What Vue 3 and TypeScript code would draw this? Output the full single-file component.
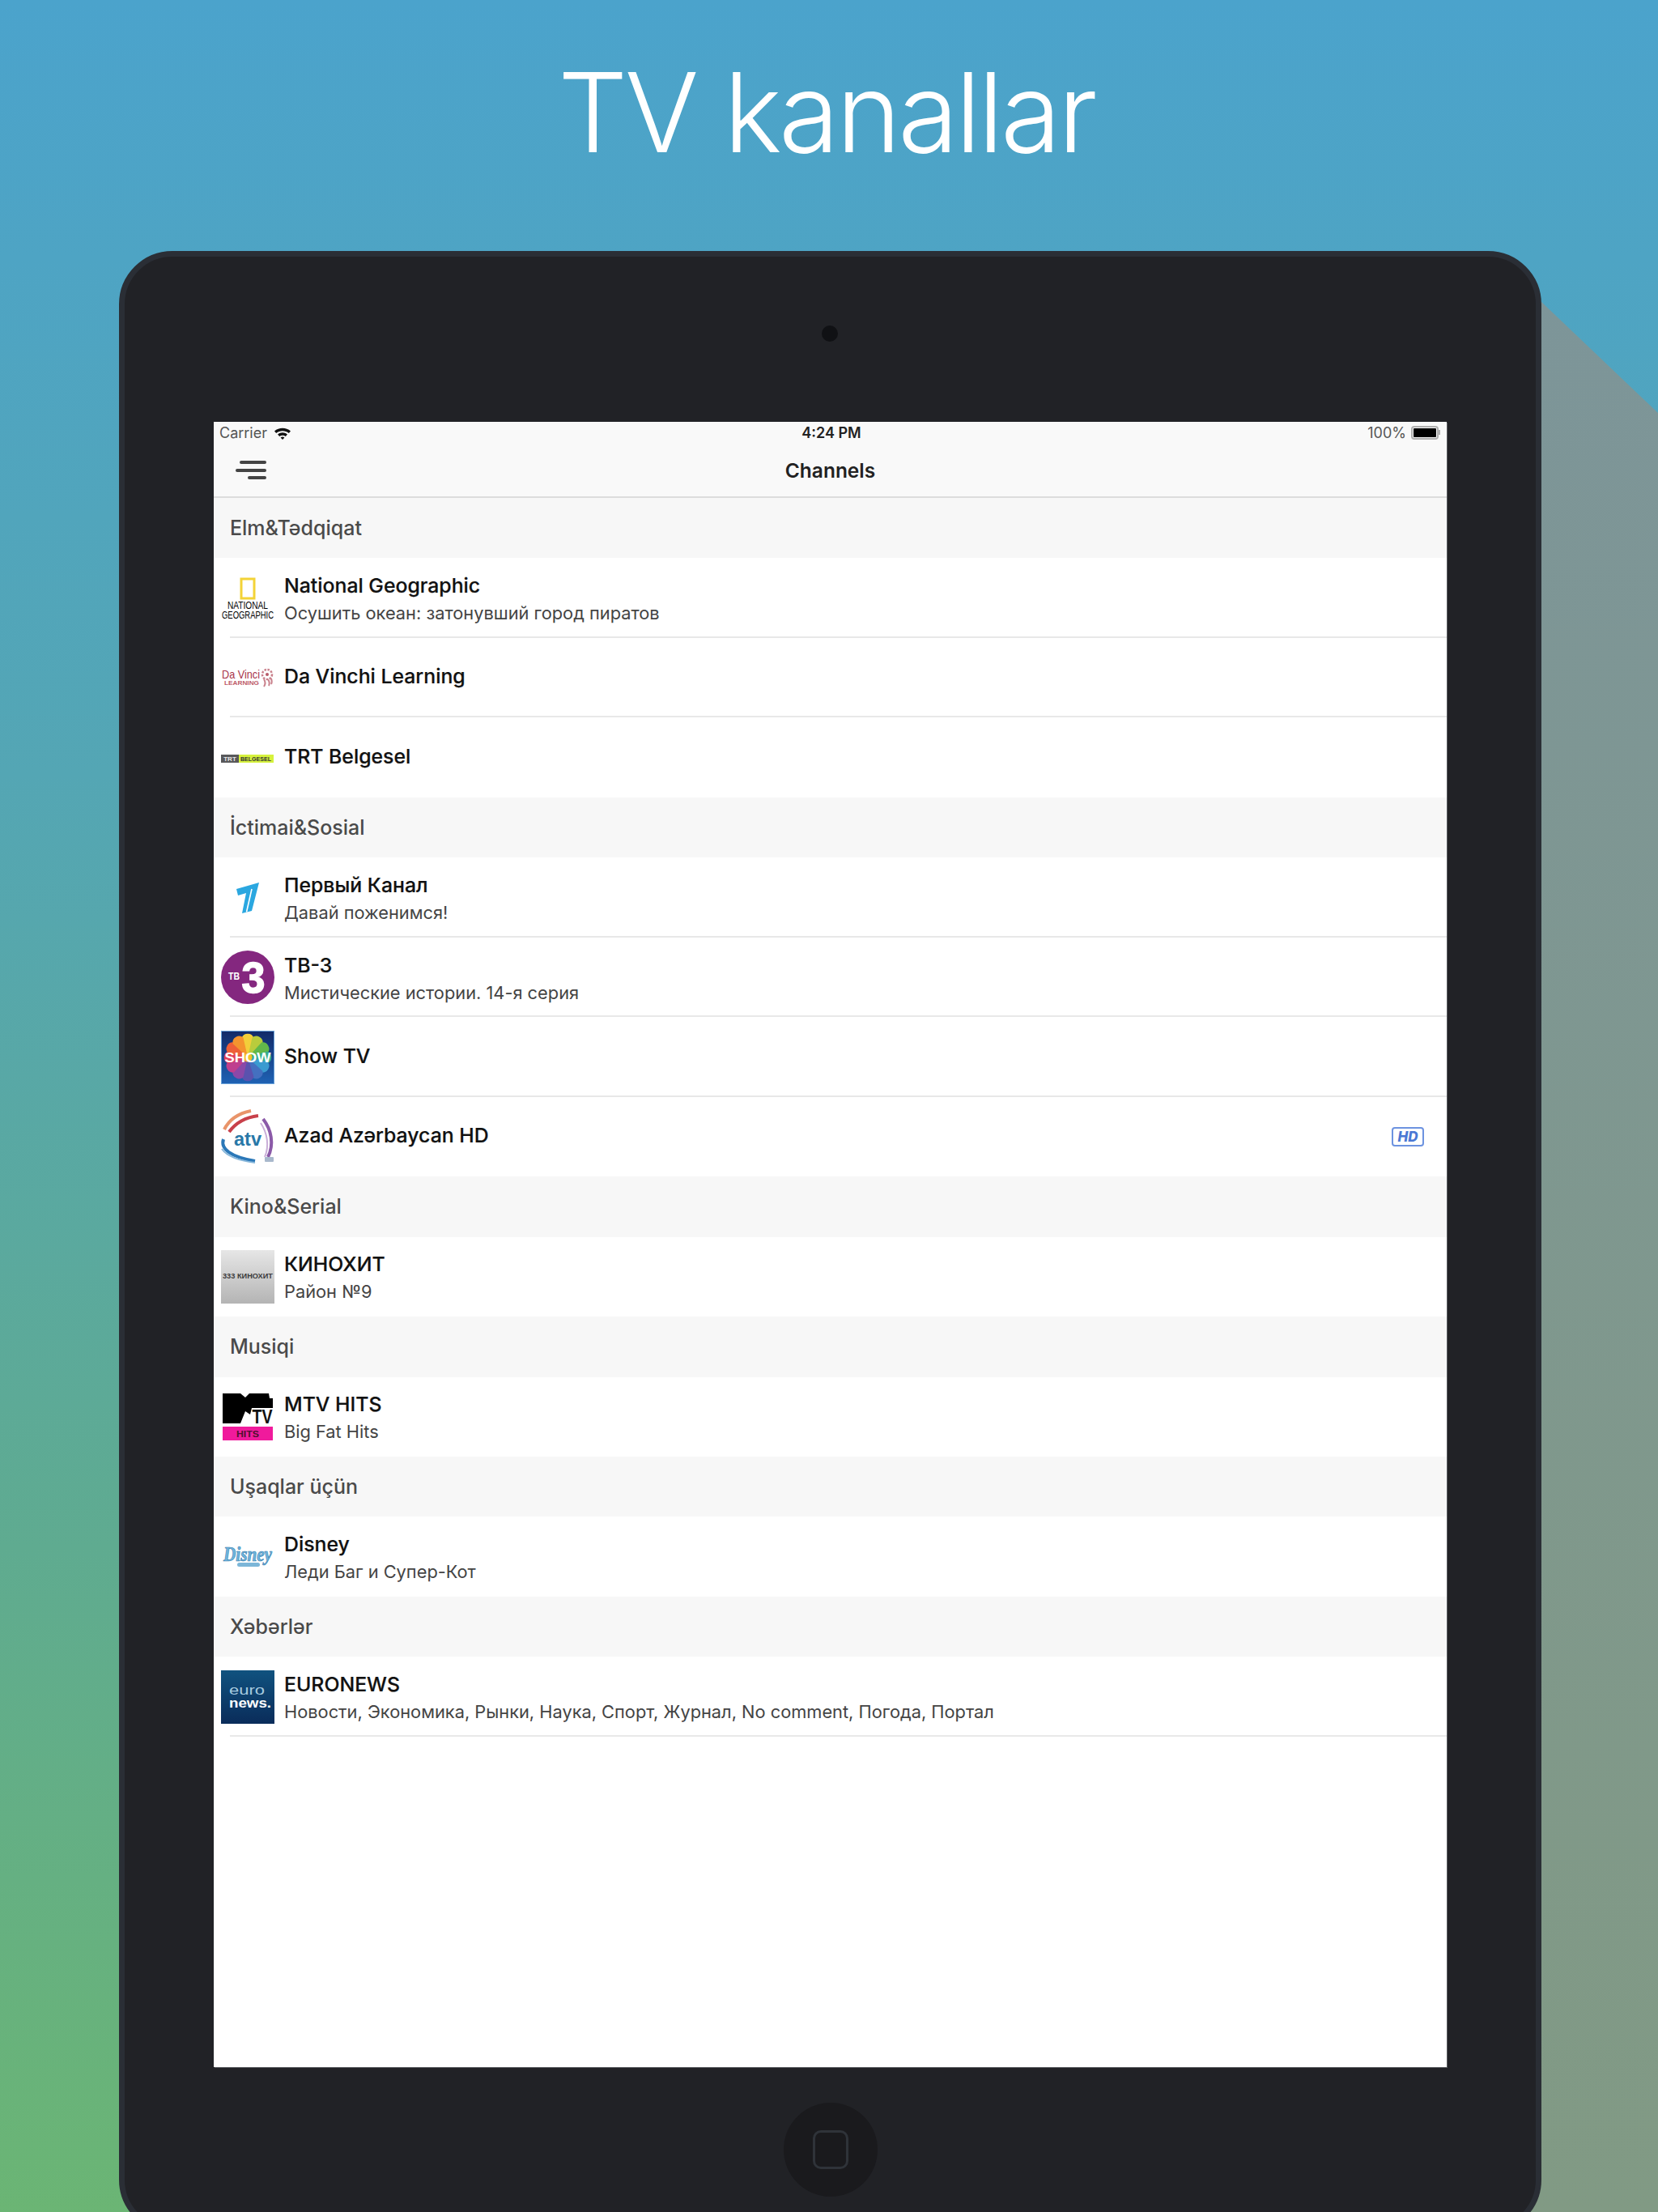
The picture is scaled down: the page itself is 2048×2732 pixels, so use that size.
<script setup lang="ts">
type Row = { name: string; sub?: string; logo: string; hd?: boolean }
type Section = { title: string; rows: Row[] }

const sections: Section[] = [
  {
    title: 'Elm&Tədqiqat',
    rows: [
      { name: 'National Geographic', sub: 'Осушить океан: затонувший город пиратов', logo: 'natgeo' },
      { name: 'Da Vinchi Learning', logo: 'davinci' },
      { name: 'TRT Belgesel', logo: 'trt' },
    ],
  },
  {
    title: 'İctimai&Sosial',
    rows: [
      { name: 'Первый Канал', sub: 'Давай поженимся!', logo: 'perviy' },
      { name: 'ТВ-3', sub: 'Мистические истории. 14-я серия', logo: 'tv3' },
      { name: 'Show TV', logo: 'show' },
      { name: 'Azad Azərbaycan HD', logo: 'atv', hd: true },
    ],
  },
  { title: 'Kino&Serial', rows: [{ name: 'КИНОХИТ', sub: 'Район №9', logo: 'kino' }] },
  { title: 'Musiqi', rows: [{ name: 'MTV HITS', sub: 'Big Fat Hits', logo: 'mtv' }] },
  { title: 'Uşaqlar üçün', rows: [{ name: 'Disney', sub: 'Леди Баг и Супер-Кот', logo: 'disney' }] },
  {
    title: 'Xəbərlər',
    rows: [
      { name: 'EURONEWS', sub: 'Новости, Экономика, Рынки, Наука, Спорт, Журнал, No comment, Погода, Портал', logo: 'euro' },
    ],
  },
]

// clockwise from twelve o'clock
const petals = ['#f2cf3a', '#b9cc3c', '#62b84a', '#35ae8c', '#3a9bd0', '#4470c0', '#5a52ae', '#8a48a8', '#bf3f8e', '#e0405a', '#ee5f38', '#f4942e']
</script>

<template>
  <div class="page">
    <div class="shadow"></div>
    <h1 class="headline">TV kanallar</h1>
    <div class="device">
      <div class="camera"></div>
      <div class="screen">
        <div class="statusbar">
          <div class="status-left">
            <span>Carrier</span>
            <svg width="22" height="16" viewBox="0 0 22 16">
              <path d="M1 5.5C6.5 .6 15.5 .6 21 5.5L18.8 7.9C14.5 4.2 7.5 4.2 3.2 7.9Z" fill="#111" />
              <path d="M5 9.6C8.5 6.6 13.5 6.6 17 9.6L14.8 12C12.6 10.2 9.4 10.2 7.2 12Z" fill="#111" />
              <path d="M11 16L8.6 13.4C10 12.3 12 12.3 13.4 13.4Z" fill="#111" />
            </svg>
          </div>
          <span class="clock">4:24 PM</span>
          <div class="status-right">
            <span>100%</span>
            <div class="battery"><div class="battery-fill"></div></div>
          </div>
        </div>
        <div class="navbar">
          <div class="burger"><i class="b1"></i><i class="b2"></i><i class="b3"></i></div>
          <div class="nav-title">Channels</div>
        </div>

        <template v-for="sec in sections" :key="sec.title">
          <div class="section">{{ sec.title }}</div>
          <div v-for="row in sec.rows" :key="row.name" class="row">
            <div class="logo">
              <svg v-if="row.logo === 'natgeo'" viewBox="0 0 66 66" width="66" height="66">
                <rect x="25" y="9" width="16" height="24" fill="none" stroke="#f3d337" stroke-width="3" />
                <text x="33" y="46" class="lg-text" font-size="12" textLength="50" lengthAdjust="spacingAndGlyphs">NATIONAL</text>
                <text x="33" y="58" class="lg-text" font-size="12" textLength="64" lengthAdjust="spacingAndGlyphs">GEOGRAPHIC</text>
              </svg>
              <svg v-else-if="row.logo === 'davinci'" viewBox="0 0 66 66" width="66" height="66">
                <text x="1" y="34" class="lg-left" font-size="15" fill="#a8334a" textLength="47" lengthAdjust="spacingAndGlyphs">Da Vinci</text>
                <text x="4" y="42" class="lg-left" font-size="7" font-weight="700" fill="#bd5a68" textLength="43" lengthAdjust="spacingAndGlyphs">LEARNING</text>
                <circle cx="57" cy="29" r="6" fill="none" stroke="#c9818c" stroke-width="2.5" stroke-dasharray="2.5 1.5" />
                <circle cx="57" cy="29" r="2" fill="#b85a68" />
                <path d="M53 35C55 38 55 41 53 44M58 35C60 38 60 41 59 43M62 34C63 37 63 39 62 41" stroke="#c9818c" stroke-width="2" fill="none" />
              </svg>
              <svg v-else-if="row.logo === 'trt'" viewBox="0 0 66 66" width="66" height="66">
                <rect x="0" y="29" width="65" height="10" fill="#d6f23c" />
                <rect x="0" y="29" width="22" height="10" fill="#58585a" />
                <text x="11" y="37" class="lg-text" font-size="8" font-weight="700" fill="#e8e8e8">TRT</text>
                <text x="43" y="37" class="lg-text" font-size="7.5" font-weight="700" fill="#333" textLength="38" lengthAdjust="spacingAndGlyphs">BELGESEL</text>
              </svg>
              <svg v-else-if="row.logo === 'perviy'" viewBox="0 0 66 66" width="66" height="66">
                <path d="M19 22L47 14L38 49L26 52L31 27L21 30Z" fill="#2aa7e0" />
                <path d="M38 22L31.5 50.5" stroke="#fff" stroke-width="1.6" />
              </svg>
              <svg v-else-if="row.logo === 'tv3'" viewBox="0 0 66 66" width="66" height="66">
                <circle cx="33" cy="33" r="33" fill="#84277f" />
                <text x="16" y="36" class="lg-text" font-size="13" fill="#fff" font-weight="700" textLength="14" lengthAdjust="spacingAndGlyphs">ТВ</text>
                <text x="40" y="52" class="lg-text heavy-3" font-size="54" fill="#fff" font-weight="700" textLength="29" lengthAdjust="spacingAndGlyphs">3</text>
              </svg>
              <svg v-else-if="row.logo === 'show'" viewBox="0 0 66 66" width="66" height="66">
                <defs>
                  <linearGradient id="showBg" x1="0" y1="0" x2="0" y2="1">
                    <stop offset="0" stop-color="#122a68" />
                    <stop offset="1" stop-color="#1f62b4" />
                  </linearGradient>
                </defs>
                <rect x=".5" y=".5" width="65" height="65" fill="url(#showBg)" stroke="#6aa3da" />
                <g v-for="(c, i) in petals" :key="i" :transform="`rotate(${i * 30} 33 33)`">
                  <path d="M33 33L25.5 9A8 8 0 0 1 40.5 9Z" :fill="c" />
                </g>
                <circle cx="33" cy="33" r="5.5" fill="#f5c02a" />
                <text x="33" y="39" class="lg-text" font-size="17" fill="#fff" font-weight="700" textLength="57" lengthAdjust="spacingAndGlyphs">SHOW</text>
              </svg>
              <svg v-else-if="row.logo === 'atv'" viewBox="0 0 66 66" width="66" height="66" fill="none">
                <path d="M4 24C10 12 22 4 37 1" stroke="#e9946a" stroke-width="4" />
                <path d="M10 27C18 16 30 9 46 7" stroke="#c8404a" stroke-width="4" />
                <path d="M52 11C62 24 66 42 58 58" stroke="#8b5aa8" stroke-width="4" />
                <path d="M49 16C57 28 60 44 54 58" stroke="#c9aed8" stroke-width="2" />
                <path d="M3 36C-1 48 12 58 42 63" stroke="#2b78b8" stroke-width="4" />
                <path d="M1 48C8 58 26 63 42 65" stroke="#86b6da" stroke-width="2" />
                <rect x="54" y="58" width="11" height="6" rx="1" fill="#a8b8cc" />
                <text x="33" y="44" class="lg-text" font-size="24" fill="#2878a8" font-weight="700" textLength="34" lengthAdjust="spacingAndGlyphs">atv</text>
              </svg>
              <svg v-else-if="row.logo === 'kino'" viewBox="0 0 66 66" width="66" height="66">
                <defs>
                  <linearGradient id="kinoBg" x1="0" y1="0" x2="0" y2="1">
                    <stop offset="0" stop-color="#e6e6e6" />
                    <stop offset="1" stop-color="#b4b4b4" />
                  </linearGradient>
                </defs>
                <rect width="66" height="66" fill="url(#kinoBg)" />
                <text x="33" y="35" class="lg-text" font-size="9" font-weight="700" fill="#3c3c3c" textLength="62" lengthAdjust="spacingAndGlyphs">333 КИНОХИТ</text>
              </svg>
              <svg v-else-if="row.logo === 'mtv'" viewBox="0 0 66 66" width="66" height="66">
                <rect x="2" y="4" width="62" height="37" fill="#000" />
                <path d="M24 4H35L30 9Z" fill="#fff" />
                <path d="M59 4H64V10H60Z" fill="#fff" />
                <path d="M24 41L30 26L36 30L38 22H64V41Z" fill="#fff" />
                <text x="51" y="41" class="lg-text" font-size="23" font-weight="700" fill="#111" textLength="25" lengthAdjust="spacingAndGlyphs">TV</text>
                <rect x="2" y="45" width="62" height="17" fill="#f01a9c" />
                <text x="33" y="58" class="lg-text" font-size="11" fill="#50102f" font-weight="700" textLength="28" lengthAdjust="spacingAndGlyphs">HITS</text>
              </svg>
              <svg v-else-if="row.logo === 'disney'" viewBox="0 0 66 66" width="66" height="66">
                <text x="33" y="38" class="lg-serif" font-size="25" fill="#71b7de" stroke="#3a7fb0" stroke-width=".7" textLength="60" lengthAdjust="spacingAndGlyphs">Disney</text>
                <rect x="20" y="40" width="28" height="5" rx="2.5" fill="#7cb6d8" />
              </svg>
              <svg v-else-if="row.logo === 'euro'" viewBox="0 0 66 66" width="66" height="66">
                <defs>
                  <linearGradient id="euroBg" x1="0" y1="0" x2="0" y2="1">
                    <stop offset="0" stop-color="#10527f" />
                    <stop offset="1" stop-color="#0a2c5a" />
                  </linearGradient>
                </defs>
                <rect width="66" height="66" fill="url(#euroBg)" />
                <text x="32" y="30" class="lg-text" font-size="17" fill="#a7cbe0" textLength="44" lengthAdjust="spacingAndGlyphs">euro</text>
                <text x="36" y="46" class="lg-text" font-size="17" fill="#fff" font-weight="700" textLength="52" lengthAdjust="spacingAndGlyphs">news.</text>
              </svg>
            </div>
            <div class="info" :class="{ single: !row.sub }">
              <div class="name">{{ row.name }}</div>
              <div v-if="row.sub" class="sub">{{ row.sub }}</div>
            </div>
            <div v-if="row.hd" class="hd">HD</div>
          </div>
        </template>
      </div>
      <div class="home"><div class="home-square"></div></div>
    </div>
  </div>
</template>

<style>
html, body {
  margin: 0;
  padding: 0;
}
</style>

<style scoped>
.page {
  position: relative;
  width: 2048px;
  height: 2732px;
  overflow: hidden;
  background: linear-gradient(180deg, #4ba3cc 0%, #54a6b4 35%, #5fab90 70%, #6bb574 100%);
  font-family: Inter, "Noto Sans", sans-serif;
}
.shadow {
  position: absolute;
  left: 1880px;
  top: 350px;
  width: 168px;
  height: 2382px;
  background: linear-gradient(180deg, #7d9599 0%, #819a84 100%);
  clip-path: polygon(0 0, 100% 160px, 100% 100%, 0 100%);
}
.headline {
  margin: 0;
  height: 310px;
  box-sizing: border-box;
  padding: 59px 7px 0 0;
  text-align: center;
  color: #fff;
  font-family: Inter, Lato, sans-serif;
  font-weight: 300;
  font-size: 136px;
  line-height: 160px;
  letter-spacing: -3.8px;
}
.device {
  position: relative;
  margin-left: 147px;
  width: 1757px;
  height: 2448px;
  box-sizing: border-box;
  padding: 204px 0 0 110px;
  background: #212226;
  border: 7px solid #2a2e35;
  border-radius: 66px;
}
.camera {
  position: absolute;
  left: 861px;
  top: 85px;
  width: 20px;
  height: 20px;
  border-radius: 50%;
  background: #101114;
}
.screen {
  width: 1523px;
  height: 2032px;
  background: #fff;
  overflow: hidden;
  box-shadow: 1px 1px 0 #5c5e62;
}
.statusbar {
  height: 27px;
  background: #f9f9f9;
  display: grid;
  grid-template-columns: 1fr auto 1fr;
  align-items: center;
  padding: 0 7px;
  font-size: 18px;
  color: #555;
}
.status-left {
  display: flex;
  align-items: center;
  gap: 8px;
}
.clock {
  margin-left: 3px;
  font-weight: 600;
  color: #222;
}
.status-right {
  display: flex;
  align-items: center;
  justify-content: flex-end;
  gap: 6px;
  padding-right: 3px;
}
.battery {
  position: relative;
  width: 34px;
  height: 17px;
  border: 2px solid #b0b0b0;
  border-radius: 4px;
  box-sizing: border-box;
  padding: 1px;
}
.battery::after {
  content: "";
  position: absolute;
  right: -4px;
  top: 3px;
  width: 2px;
  height: 6px;
  background: #b0b0b0;
}
.battery-fill {
  height: 100%;
  background: #000;
  border-radius: 1px;
}
.navbar {
  position: relative;
  height: 65px;
  background: #f9f9f9;
  border-bottom: 2px solid #dcdcdc;
  display: flex;
  align-items: center;
  justify-content: center;
}
.nav-title {
  font-size: 24.5px;
  font-weight: 600;
  color: #222;
}
.burger {
  position: absolute;
  left: 27px;
  top: 21px;
  width: 38px;
  display: flex;
  flex-direction: column;
  align-items: flex-end;
  gap: 5.5px;
}
.burger i {
  display: block;
  height: 4px;
  background: #444;
  border-radius: 2px;
}
.b1 {
  width: 33px;
}
.b2 {
  width: 38px;
}
.b3 {
  width: 23px;
}
.section {
  height: 74.4px;
  box-sizing: border-box;
  padding-left: 20px;
  display: flex;
  align-items: center;
  background: #f7f7f7;
  color: #4a4a4a;
  font-size: 25px;
  font-weight: 500;
}
.row {
  position: relative;
  height: 98.5px;
  box-sizing: border-box;
  padding: 0 28px 0 9px;
  display: flex;
  align-items: center;
  gap: 12px;
  background: #fff;
}
.row::after {
  content: "";
  position: absolute;
  left: 20px;
  right: 0;
  bottom: 0;
  height: 2px;
  background: #e8e8e8;
}
.row:has(+ .section)::after {
  display: none;
}
.logo {
  width: 66px;
  height: 66px;
  flex: none;
}
.logo svg {
  display: block;
  overflow: visible;
}
.lg-text {
  text-anchor: middle;
  font-family: "Liberation Sans", sans-serif;
}
.lg-left {
  font-family: "Liberation Sans", sans-serif;
}
.lg-serif {
  text-anchor: middle;
  font-family: "Liberation Serif", serif;
  font-style: italic;
  font-weight: 700;
}
.heavy-3 {
  stroke: #fff;
  stroke-width: 1.5px;
}
.info {
  flex: 1;
  min-width: 0;
  padding-top: 2px;
}
.info.single {
  padding: 0 0 4px;
}
.name {
  font-size: 24.8px;
  line-height: 36px;
  font-weight: 500;
  color: #111;
  -webkit-text-stroke: 0.2px #111;
}
.sub {
  font-size: 21.8px;
  line-height: 33px;
  color: #444;
}
.hd {
  width: 40px;
  height: 24px;
  box-sizing: border-box;
  border: 2px solid #6d93e0;
  border-radius: 4px;
  color: #4a78d4;
  font-size: 17px;
  line-height: 20px;
  font-weight: 800;
  font-style: italic;
  text-align: center;
}
.home {
  position: absolute;
  left: 814px;
  top: 2280px;
  width: 116px;
  height: 116px;
  border-radius: 50%;
  background: #1a1a1d;
  display: flex;
  align-items: center;
  justify-content: center;
}
.home-square {
  width: 44px;
  height: 48px;
  box-sizing: border-box;
  border: 3px solid #2f3339;
  border-radius: 10px;
}
</style>
